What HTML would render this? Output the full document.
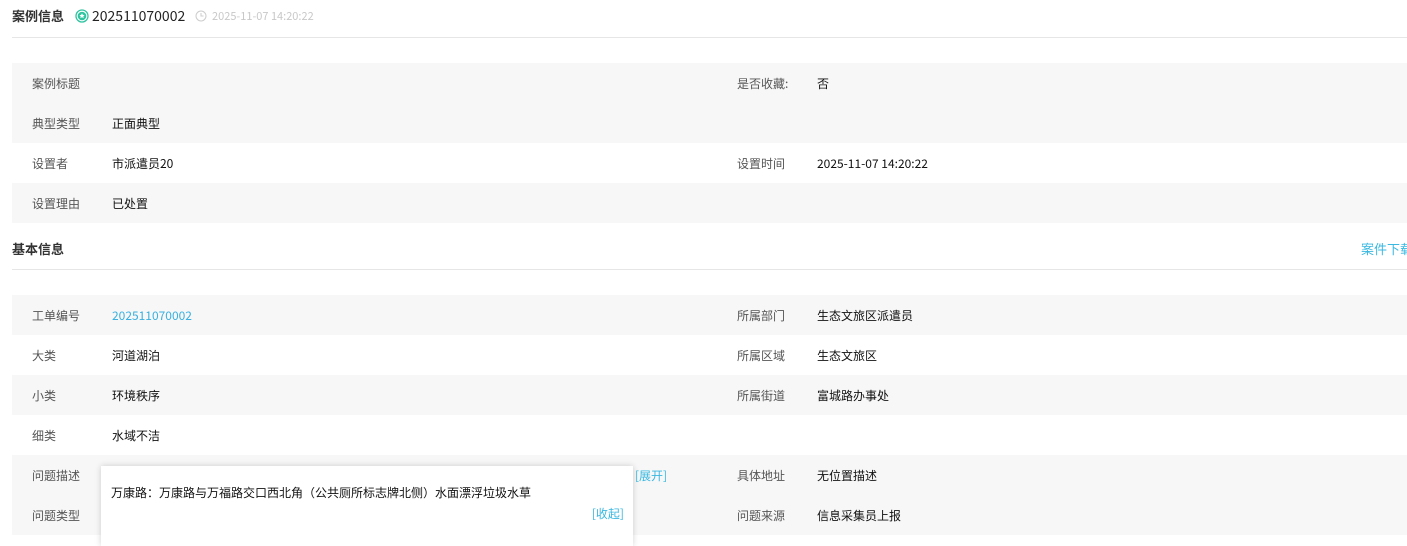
<!DOCTYPE html>
<html><head><meta charset="utf-8"><style>
*{margin:0;padding:0;box-sizing:border-box}
body{width:1407px;height:535px;overflow:hidden;background:#fff;font-family:"Noto Sans CJK SC","Liberation Sans",sans-serif;font-size:12px;line-height:16px;color:#111;position:relative}
.abs{position:absolute;white-space:nowrap}
.row{position:absolute;left:12px;width:1395px;height:40px}
.g{background:#f7f7f7}
.l{position:absolute;top:13px;color:#555;font-size:12px}
.v{position:absolute;top:13px;color:#111}
.hr{position:absolute;left:12px;width:1395px;height:1px;background:#e6e6e6}
.h{font-weight:bold;font-size:13px;color:#333}
</style></head><body>
<div class="abs h" style="left:12px;top:8px">案例信息</div>
<svg class="abs" style="left:75px;top:9px" width="14" height="14" viewBox="0 0 14 14"><circle cx="7" cy="7" r="6" fill="none" stroke="#2ec4a0" stroke-width="1.3"/><circle cx="7" cy="7" r="4.3" fill="#2ec4a0"/><path d="M7 4.2l.8 1.7 1.8.2-1.3 1.2.4 1.8L7 8.2l-1.7.9.4-1.8-1.3-1.2 1.8-.2z" fill="#fff"/></svg>
<div class="abs" style="left:92px;top:7px;font-size:14px;line-height:18px;color:#222">202511070002</div>
<svg class="abs" style="left:195px;top:10px" width="12" height="12" viewBox="0 0 12 12"><circle cx="6" cy="6" r="5" fill="none" stroke="#ccc"/><path d="M6 3v3h2.5" fill="none" stroke="#ccc"/></svg>
<div class="abs" style="left:212px;top:8px;font-size:11px;color:#c8c8c8">2025-11-07 14:20:22</div>
<div class="hr" style="top:37px"></div>

<div class="row g" style="top:63px"><span class="l" style="left:20px">案例标题</span><span class="l" style="left:725px">是否收藏:</span><span class="v" style="left:805px">否</span></div>
<div class="row g" style="top:103px"><span class="l" style="left:20px">典型类型</span><span class="v" style="left:100px">正面典型</span></div>
<div class="row" style="top:143px"><span class="l" style="left:20px">设置者</span><span class="v" style="left:100px">市派遣员20</span><span class="l" style="left:725px">设置时间</span><span class="v" style="left:805px">2025-11-07 14:20:22</span></div>
<div class="row g" style="top:183px"><span class="l" style="left:20px">设置理由</span><span class="v" style="left:100px">已处置</span></div>

<div class="abs h" style="left:12px;top:241px">基本信息</div>
<div class="abs" style="left:1361px;top:241px;color:#3ab8e0;font-size:13px">案件下载</div>
<div class="hr" style="top:269px"></div>

<div class="row g" style="top:295px"><span class="l" style="left:20px">工单编号</span><span class="v" style="left:100px;color:#3ab0e0">202511070002</span><span class="l" style="left:725px">所属部门</span><span class="v" style="left:805px">生态文旅区派遣员</span></div>
<div class="row" style="top:335px"><span class="l" style="left:20px">大类</span><span class="v" style="left:100px">河道湖泊</span><span class="l" style="left:725px">所属区域</span><span class="v" style="left:805px">生态文旅区</span></div>
<div class="row g" style="top:375px"><span class="l" style="left:20px">小类</span><span class="v" style="left:100px">环境秩序</span><span class="l" style="left:725px">所属街道</span><span class="v" style="left:805px">富城路办事处</span></div>
<div class="row" style="top:415px"><span class="l" style="left:20px">细类</span><span class="v" style="left:100px">水域不洁</span></div>
<div class="row g" style="top:455px;height:80px"><span class="l" style="left:20px">问题描述</span><span class="l" style="left:20px;top:53px">问题类型</span><span class="v" style="left:623px;color:#3ab8e0">[展开]</span><span class="l" style="left:725px">具体地址</span><span class="v" style="left:805px">无位置描述</span><span class="l" style="left:725px;top:53px">问题来源</span><span class="v" style="left:805px;top:53px">信息采集员上报</span></div>

<div class="abs" style="left:101px;top:466px;width:532px;height:80px;background:#fff;box-shadow:0 0 6px rgba(0,0,0,.18)">
<div class="abs" style="left:10px;top:19px;color:#111">万康路：万康路与万福路交口西北角（公共厕所标志牌北侧）水面漂浮垃圾水草</div>
<div class="abs" style="right:9px;top:40px;color:#3ab8e0">[收起]</div>
</div>
</body></html>
